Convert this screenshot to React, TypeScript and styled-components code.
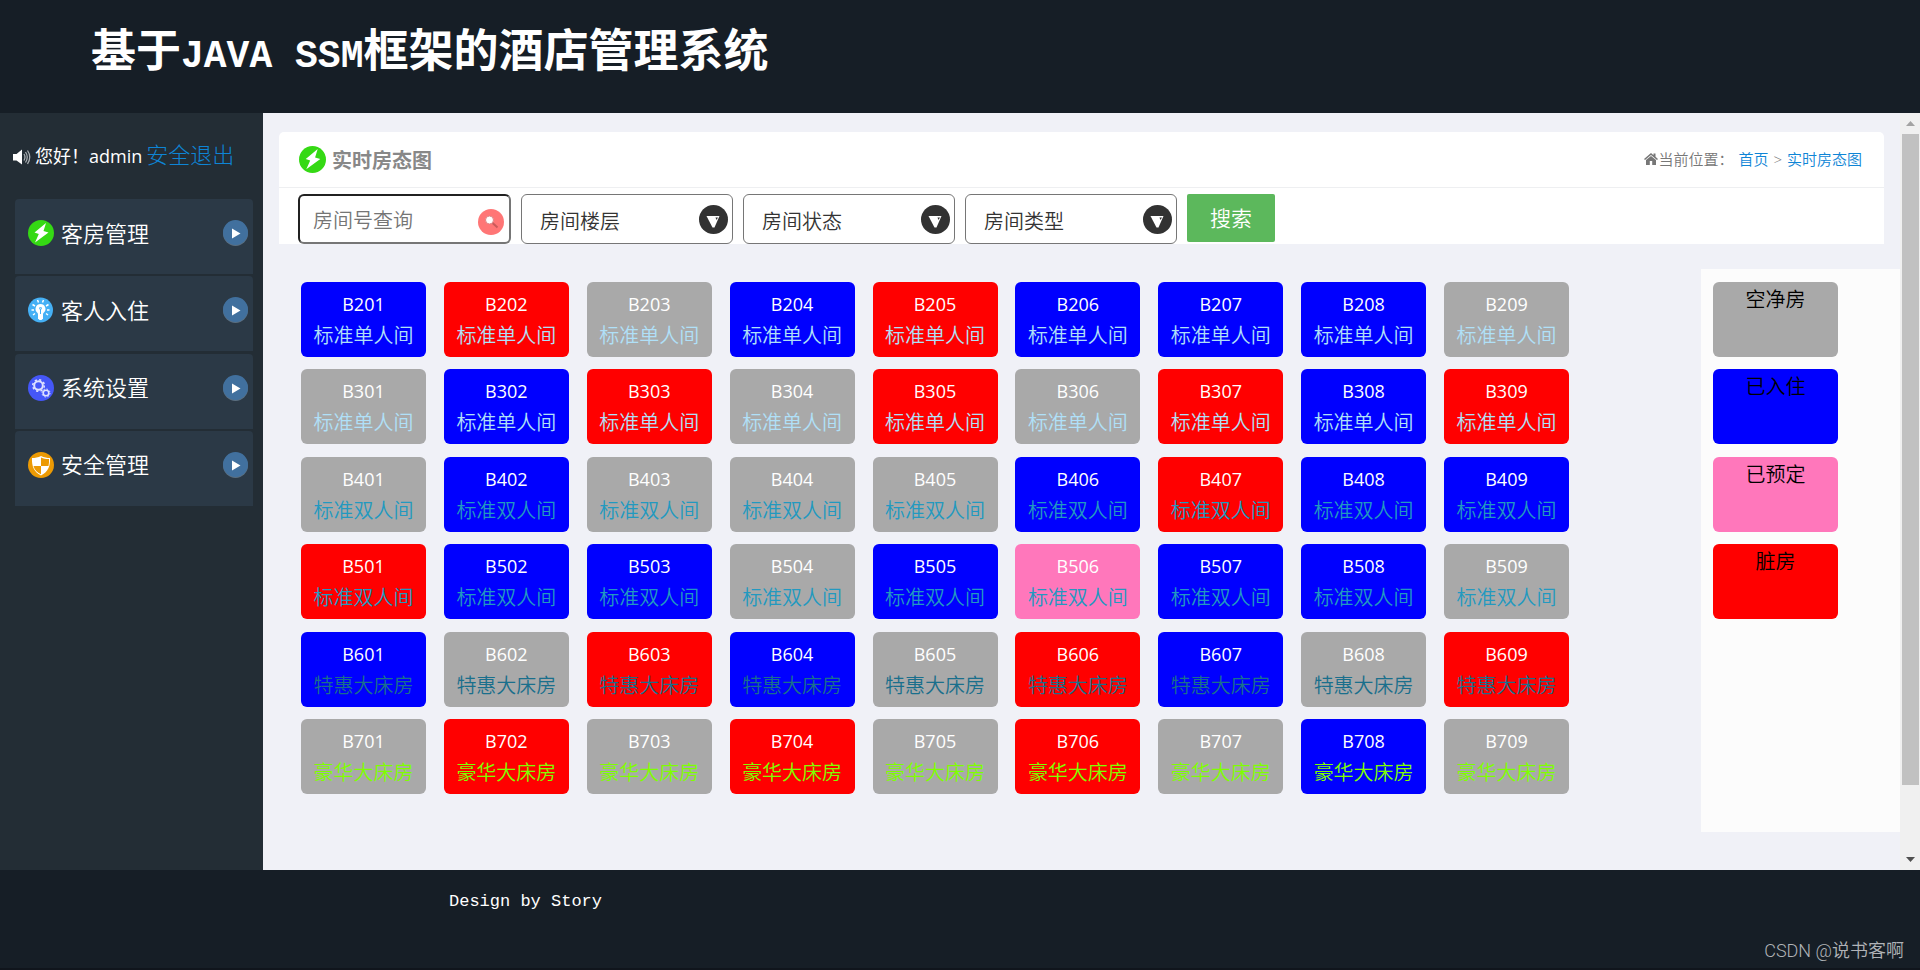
import React from "react";
import styled, { createGlobalStyle } from "styled-components";

const Global = createGlobalStyle`
  *, *::before, *::after { box-sizing: border-box; }
  body { margin: 0; background: #161e26; font-family: "Open Sans", "Noto Sans CJK SC", sans-serif; color: #333; }
  a { color: #0e85d6; text-decoration: none; }
  h1, h2, p { margin: 0; padding: 0; }
`;

const Page = styled.div`
  display: flex;
  flex-direction: column;
  min-height: 100vh;
`;
const Header = styled.header`
  height: 113px;
  padding: 18px 91px;
  background: #161e26;
`;
const Title = styled.h1`
  font-family: "Noto Sans CJK SC", sans-serif;
  font-size: 45px;
  line-height: 60px;
  font-weight: 700;
  color: #fff;
  white-space: nowrap;
`;
const Latin = styled.span`
  font-family: "Liberation Mono", monospace;
  font-size: 38px;
`;
const Body = styled.div`
  display: flex;
  flex: 1;
`;
const Sidebar = styled.aside`
  flex: none;
  width: 263px;
  padding: 28px 10px 0 15px;
  background: #232d35;
`;
const Greeting = styled.div`
  display: flex;
  align-items: center;
  gap: 4px;
  height: 32px;
  margin: 0 0 26px -2px;
  font-size: 18px;
  line-height: 28px;
  color: #fff;
  white-space: nowrap;
`;
const UserName = styled.span`
  padding-bottom: 2px;
`;
const Logout = styled.a`
  padding-bottom: 6px;
  font-size: 22px;
  font-weight: 300;
`;
const Nav = styled.nav`
  display: flex;
  flex-direction: column;
  justify-content: space-between;
  height: 307px;
`;
const NavItem = styled.button`
  display: flex;
  align-items: center;
  gap: 7px;
  height: 75px;
  padding: 0 5px 7px 13px;
  border: 0;
  border-radius: 4px 4px 0 0;
  background: #2b3946;
  font-family: "Noto Sans CJK SC", sans-serif;
  font-size: 22px;
  font-weight: 350;
  color: #fff;
`;
const NavLabel = styled.span`
  flex: 1;
  padding-bottom: 3px;
  text-align: left;
`;
const Main = styled.main`
  display: flex;
  flex-direction: column;
  flex: 1;
  min-width: 0;
  padding: 19px 0 38px 16px;
  background: #f0f1f7;
`;
const Panel = styled.section`
  margin-right: 16px;
  border-radius: 5px 5px 0 0;
  background: #fff;
`;
const PanelHead = styled.div`
  display: flex;
  align-items: center;
  justify-content: space-between;
  height: 56px;
  padding: 0 22px 0 20px;
  border-bottom: 1px solid #eeeff1;
`;
const PanelTitle = styled.h2`
  display: flex;
  align-items: center;
  gap: 6px;
  font-size: 20px;
  font-weight: 700;
  color: #888;
`;
const Crumbs = styled.nav`
  display: flex;
  align-items: center;
  gap: 5px;
  padding-bottom: 2px;
  font-size: 15px;
  font-weight: 350;
  color: #777;
`;
const Place = styled.span`
  display: flex;
  align-items: center;
`;
const Filters = styled.form`
  display: flex;
  gap: 10px;
  padding: 6px 19px 0;
`;
const Field = styled.label`
  position: relative;
`;
const TextBox = styled.input`
  display: block;
  width: 213px;
  height: 50px;
  padding: 0 42px 0 13px;
  border: 2px inset #767676;
  border-radius: 6px;
  background: #fff;
  font: 20px "Noto Sans CJK SC", sans-serif;
  font-weight: 350;
  &::placeholder { color: #757575; }
`;
const Select = styled.select`
  appearance: none;
  display: block;
  width: 212px;
  height: 50px;
  padding: 2px 36px 0 18px;
  border: 1px solid #767676;
  border-radius: 6px;
  background: #fff;
  font: 20px "Noto Sans CJK SC", sans-serif;
  font-weight: 350;
  color: #333;
`;
const FieldIcon = styled.span<{ $top: number; $right: number }>`
  position: absolute;
  top: ${(p) => p.$top}px;
  right: ${(p) => p.$right}px;
  display: flex;
  pointer-events: none;
`;
const SearchButton = styled.button`
  width: 88px;
  height: 48px;
  padding: 0 0 3px;
  border: 0;
  border-radius: 2px;
  background: #5cb85c;
  font: 21px "Noto Sans CJK SC", sans-serif;
  font-weight: 350;
  color: #fff;
`;
const Content = styled.div`
  display: flex;
  flex: 1;
  justify-content: space-between;
  align-items: stretch;
  margin-top: 25px;
`;
const Rooms = styled.div`
  display: grid;
  grid-template-columns: repeat(9, 125px);
  justify-content: space-between;
  align-content: space-between;
  width: 1268px;
  height: 512px;
  margin: 13px 0 0 22px;
`;
const tileColors = { free: "#a9a9a9", used: "#0000ff", booked: "#ff77bb", dirty: "#ff0000" };
type Status = keyof typeof tileColors;
const Tile = styled.div<{ $status: Status }>`
  width: 125px;
  height: 75px;
  border-radius: 6px;
  background: ${(p) => tileColors[p.$status]};
  text-align: center;
  white-space: nowrap;
`;
const RoomNumber = styled.p`
  padding-top: 6px;
  font-size: 18px;
  line-height: 32px;
  color: #fff;
`;
const RoomType = styled.p<{ $color: string }>`
  font-size: 20px;
  line-height: 32px;
  font-weight: 350;
  color: ${(p) => p.$color};
`;
const Legend = styled.aside`
  flex: none;
  width: 199px;
  padding: 13px 12px;
  background: #fcfcfc;
`;
const LegendList = styled.div`
  display: flex;
  flex-direction: column;
  justify-content: space-between;
  height: 337px;
  font-size: 20px;
  line-height: 36px;
  font-weight: 350;
  color: #000;
`;
const ScrollTrack = styled.div`
  display: flex;
  flex-direction: column;
  align-items: center;
  flex: none;
  width: 20px;
  background: #f0f0f0;
`;
const ScrollArrow = styled.div`
  display: flex;
  align-items: center;
  justify-content: center;
  height: 21px;
`;
const ScrollSpace = styled.div`
  flex: 1;
  width: 17px;
`;
const ScrollThumb = styled.div`
  height: 91%;
  background: #c1c1c1;
`;
const Footer = styled.footer`
  display: flex;
  justify-content: space-between;
  height: 100px;
  padding: 19px 16px 4px 449px;
  border-bottom: 2px solid #10151c;
  background: #161e26;
`;
const Credit = styled.p`
  font: 17px/26px "Liberation Mono", monospace;
  color: #fff;
`;
const Watermark = styled.p`
  align-self: flex-end;
  font: 18px/26px Roboto, "Noto Sans CJK SC", sans-serif;
  font-weight: 350;
  color: #b0b3b7;
`;

const Bolt = ({ size = 26 }: { size?: number }) => (
  <svg width={size} height={size} viewBox="0 0 26 26">
    <circle cx="13" cy="13" r="13" fill="#35d914" />
    <path d="M18 3 6.500 12.500l4.300 1.500L7 22.500l13.500-10-5-1.500z" fill="#fff" />
  </svg>
);
const Bulb = () => (
  <svg width="26" height="26" viewBox="0 0 26 26">
    <circle cx="12.500" cy="13" r="12.500" fill="#45b0f5" />
    <path d="M12.500 7a5 5 0 0 1 3.200 8.800c-.7.700-.7 1.400-.7 2.400h-5c0-1 0-1.700-.7-2.400A5 5 0 0 1 12.500 7z" fill="#fff" />
    <path d="M10 18h5v3.500L13.500 23h-2L10 21.500z" fill="#fff" />
    <path d="M9.500 3l1 2.500M15.500 3l-1 2.500M4.500 7.500l2.500 1.500M20.500 7.500L18 9M3.500 13H6M19 13h2.500M5 18l2-1.500M20 18l-2-1.500" stroke="#fff" strokeWidth="1.500" />
    <path d="M12.500 17v-4l-1-2 1-1 1 1-1 2" stroke="#45b0f5" fill="none" />
  </svg>
);
const Gears = () => (
  <svg width="26" height="26" viewBox="0 0 26 26" fill="none" stroke="#dfe2ff">
    <circle cx="13" cy="13" r="13" fill="#4557f8" stroke="none" />
    <circle cx="10.500" cy="10.500" r="4.300" strokeWidth="2" />
    <circle cx="10.500" cy="10.500" r="5.800" strokeWidth="1.500" strokeDasharray="2.200 2.350" />
    <circle cx="18" cy="18" r="2.800" strokeWidth="1.600" />
    <circle cx="18" cy="18" r="4" strokeWidth="1" strokeDasharray="1.500 1.640" />
  </svg>
);
const Shield = () => (
  <svg width="26" height="26" viewBox="0 0 26 26">
    <circle cx="13" cy="13" r="13" fill="#ec9a04" />
    <path d="M13 4c3 1.600 6 2 9 2C22.500 14 20 20 13 23.500 6 20 3.500 14 4 6c3 0 6-.4 9-2z" fill="#fff" />
    <path d="M13 14H5.500C6.500 18 9 20.500 13 22.300zM13 5.500V14h7.500c.5-2.200.7-4.500.5-7-3 0-5.500-.4-8-1.500z" fill="#ec9a04" />
  </svg>
);
const Play = () => (
  <svg width="25" height="26" viewBox="0 0 25 26">
    <circle cx="12.500" cy="13.500" r="12.500" fill="#5b6f80" />
    <circle cx="12.500" cy="12.500" r="12.500" fill="#41709e" />
    <path d="M9 8.500v10l8.500-5z" fill="#fff" />
  </svg>
);
const Speaker = () => (
  <svg width="18" height="18" viewBox="0 0 18 18">
    <path d="M0 6h3.500L9 1.500v15L3.500 12.500H0z" fill="#fff" />
    <path d="M11 6q2 3 0 6.500M12.500 4q3.500 5 0 10.500M14.500 2.500q4.500 6.500 0 13.500" fill="none" stroke="#a9aeb2" strokeWidth="1.300" />
  </svg>
);
const Magnifier = () => (
  <svg width="26" height="26" viewBox="0 0 26 26">
    <circle cx="13" cy="13" r="13" fill="#ff7676" />
    <path d="m13.500 13 6 5.500" stroke="#c95a5a" strokeWidth="2" />
    <circle cx="11.500" cy="11" r="4" fill="#fff" stroke="#e08585" strokeWidth="1" />
  </svg>
);
const Caret = () => (
  <svg width="29" height="29" viewBox="0 0 29 29">
    <circle cx="14.500" cy="14.500" r="14.500" fill="#323232" />
    <path d="M7.500 11h13l-5 11.500h-2z" fill="#fff" />
    <path d="M16.500 12.500h2.500l-1.500 2.500z" fill="#323232" />
  </svg>
);
const Home = () => (
  <svg width="14" height="12" viewBox="0 0 14 12" fill="#777">
    <path d="M7 0 0 6l1 1 6-5 6 5 1-1-2.500-2.200V.5h-2v1.700z" />
    <path d="m7 3-5 4v5h3.800V8h2.400v4H12V7z" />
  </svg>
);
const Arrow = ({ down = false }: { down?: boolean }) => (
  <svg width="9" height="5" viewBox="0 0 9 5">
    <path d={down ? "M0 0h9L4.500 5z" : "M0 5h9L4.500 0z"} fill={down ? "#505050" : "#a3a3a3"} />
  </svg>
);

const menu = [
  { label: "客房管理", icon: <Bolt /> },
  { label: "客人入住", icon: <Bulb /> },
  { label: "系统设置", icon: <Gears /> },
  { label: "安全管理", icon: <Shield /> },
];
const codes: Record<string, Status> = { f: "free", u: "used", b: "booked", d: "dirty" };
const floors = [
  { floor: 2, type: "标准单人间", color: "#b0e0f8", rooms: "udfuduuuf" },
  { floor: 3, type: "标准单人间", color: "#b0e0f8", rooms: "fudfdfdud" },
  { floor: 4, type: "标准双人间", color: "#2299c0", rooms: "fufffuduu" },
  { floor: 5, type: "标准双人间", color: "#2299c0", rooms: "duufubuuf" },
  { floor: 6, type: "特惠大床房", color: "#1a6f8c", rooms: "ufdufdufd" },
  { floor: 7, type: "豪华大床房", color: "#7fff00", rooms: "fdfdfdfuf" },
];
const legend: { label: string; status: Status }[] = [
  { label: "空净房", status: "free" },
  { label: "已入住", status: "used" },
  { label: "已预定", status: "booked" },
  { label: "脏房", status: "dirty" },
];

export default function App() {
  return (
    <Page>
      <Global />
      <Header>
        <Title>基于<Latin>JAVA SSM</Latin>框架的酒店管理系统</Title>
      </Header>
      <Body>
        <Sidebar>
          <Greeting>
            <Speaker />
            <UserName>您好！admin</UserName>
            <Logout href="#logout">安全退出</Logout>
          </Greeting>
          <Nav>
            {menu.map((m) => (
              <NavItem key={m.label} type="button">
                {m.icon}
                <NavLabel>{m.label}</NavLabel>
                <Play />
              </NavItem>
            ))}
          </Nav>
        </Sidebar>
        <Main>
          <Panel>
            <PanelHead>
              <PanelTitle><Bolt size={27} />实时房态图</PanelTitle>
              <Crumbs>
                <Place><Home />当前位置：</Place>
                <a href="#home">首页</a>
                <span>&gt;</span>
                <a href="#rooms">实时房态图</a>
              </Crumbs>
            </PanelHead>
            <Filters>
              <Field>
                <TextBox type="text" placeholder="房间号查询" aria-label="房间号查询" />
                <FieldIcon $top={15} $right={7}><Magnifier /></FieldIcon>
              </Field>
              {["房间楼层", "房间状态", "房间类型"].map((name) => (
                <Field key={name}>
                  <Select aria-label={name}><option>{name}</option></Select>
                  <FieldIcon $top={11} $right={5}><Caret /></FieldIcon>
                </Field>
              ))}
              <SearchButton type="button">搜索</SearchButton>
            </Filters>
          </Panel>
          <Content>
            <Rooms>
              {floors.flatMap((f) =>
                f.rooms.split("").map((c, i) => (
                  <Tile key={`${f.floor}${i}`} $status={codes[c]}>
                    <RoomNumber>{`B${f.floor}0${i + 1}`}</RoomNumber>
                    <RoomType $color={f.color}>{f.type}</RoomType>
                  </Tile>
                ))
              )}
            </Rooms>
            <Legend>
              <LegendList>
                {legend.map((l) => (
                  <Tile key={l.label} $status={l.status}>{l.label}</Tile>
                ))}
              </LegendList>
            </Legend>
          </Content>
        </Main>
        <ScrollTrack aria-hidden="true">
          <ScrollArrow><Arrow /></ScrollArrow>
          <ScrollSpace><ScrollThumb /></ScrollSpace>
          <ScrollArrow><Arrow down /></ScrollArrow>
        </ScrollTrack>
      </Body>
      <Footer>
        <Credit>Design by Story</Credit>
        <Watermark>CSDN @说书客啊</Watermark>
      </Footer>
    </Page>
  );
}
